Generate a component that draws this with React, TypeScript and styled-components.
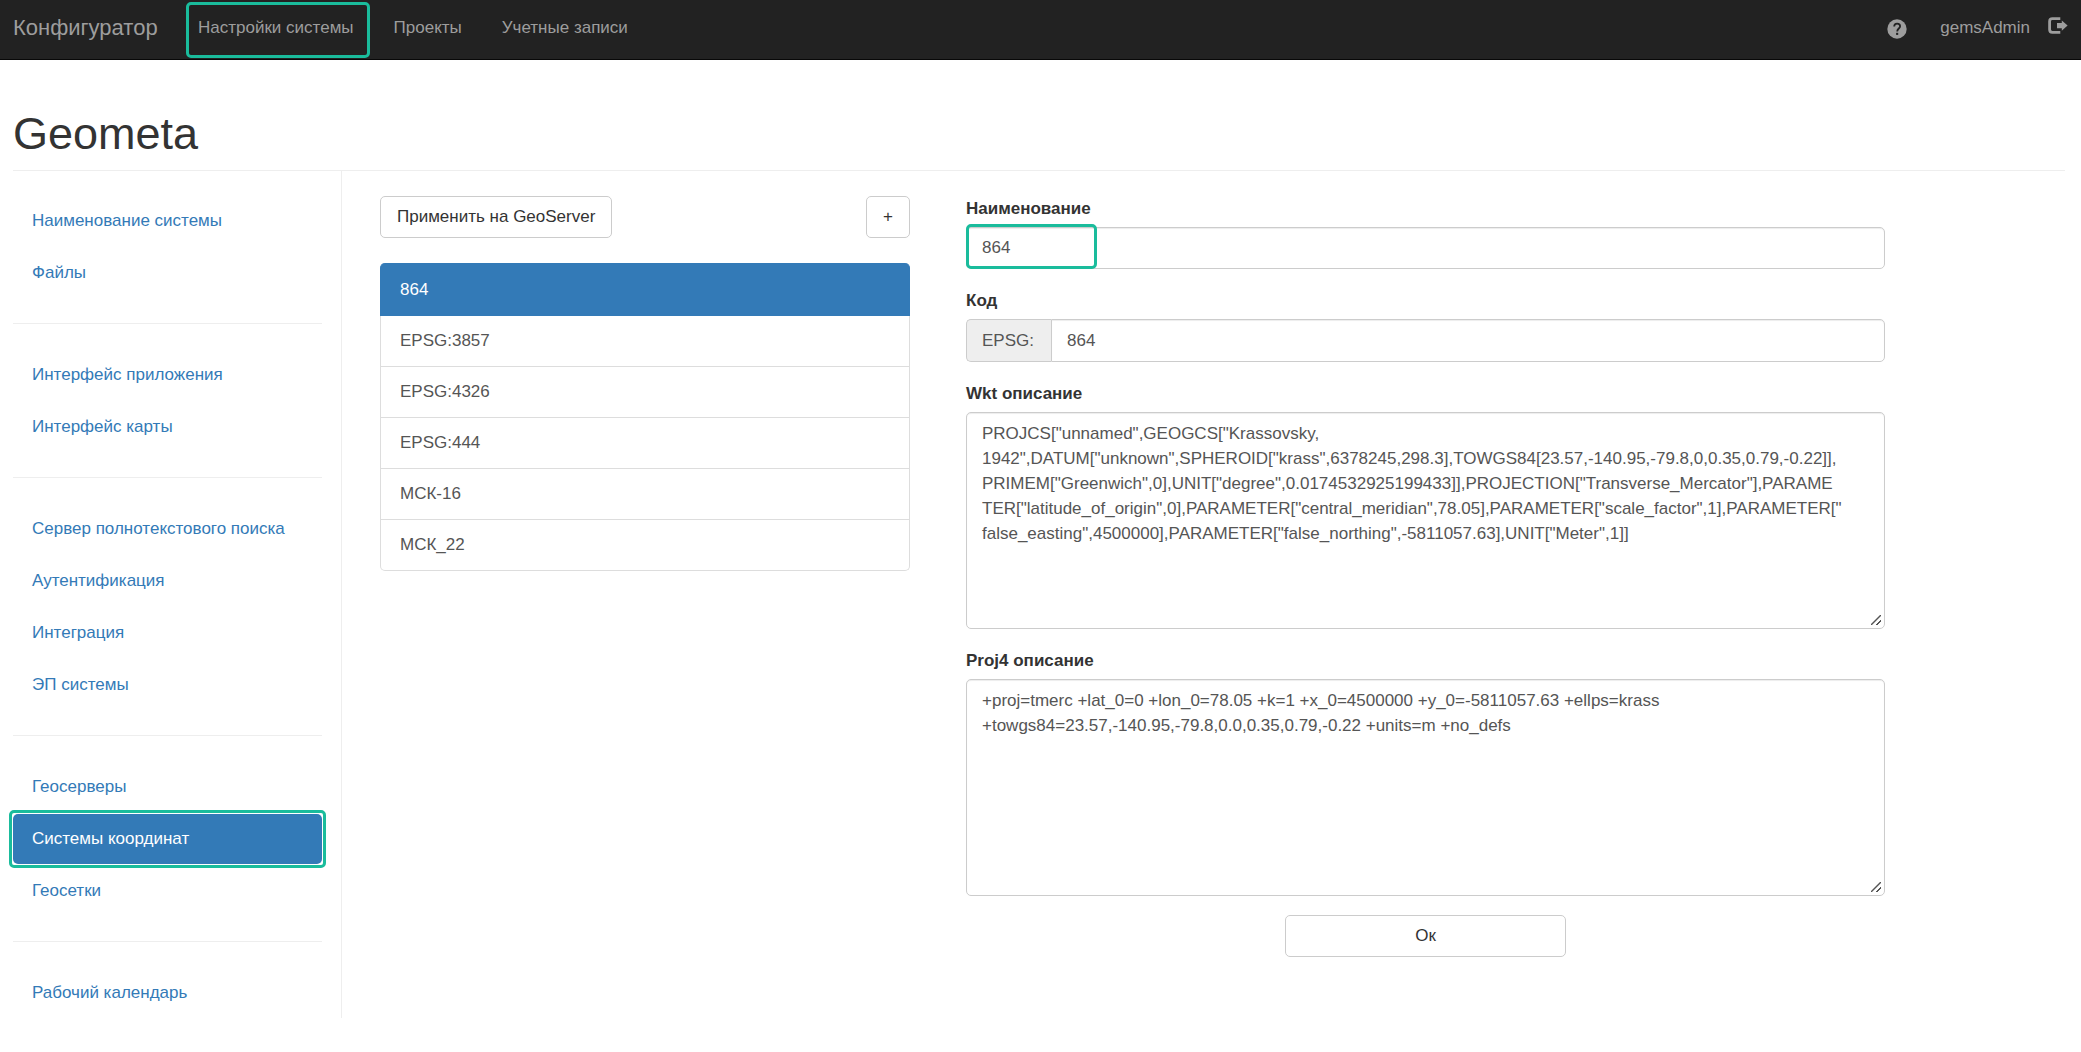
import React, { useState } from "react";
import styled, { createGlobalStyle, css } from "styled-components";

const accent = "#1abc9c";
const primary = "#337ab7";
const line = "#eeeeee";
const control = "#cccccc";

const GlobalStyle = createGlobalStyle`
  *, *::before, *::after { box-sizing: border-box; }
  body {
    margin: 0;
    background: #fff;
    color: #333;
    font-family: "Liberation Sans", Arial, Helvetica, sans-serif;
    font-size: 17px;
    line-height: 25px;
  }
  button, input, textarea { font: inherit; }
  a { text-decoration: none; }
  ul { list-style: none; margin: 0; padding: 0; }
`;

const callout = css`
  position: relative;
  &::after {
    content: "";
    position: absolute;
    border: 3px solid ${accent};
    border-radius: 5px;
    pointer-events: none;
  }
`;

const Navbar = styled.header`
  display: flex;
  align-items: stretch;
  height: 60px;
  padding: 0 13px;
  background: #222;
  border-bottom: 1px solid #080808;
`;

const Brand = styled.a`
  width: 165px;
  padding: 15px 0;
  color: #9d9d9d;
  font-size: 22px;
`;

const NavList = styled.nav`
  display: flex;
  flex: 1;
`;

const NavLink = styled.a<{ $marked?: boolean }>`
  padding: 15px 20px;
  color: #9d9d9d;
  ${({ $marked }) =>
    $marked &&
    css`
      ${callout}
      &::after {
        inset: 2px 4px 1px 8px;
      }
    `}
`;

const UserArea = styled.div`
  display: flex;
  align-items: flex-start;
  padding-top: 15px;
  color: #9d9d9d;
`;

const IconButton = styled.button`
  display: flex;
  padding: 0;
  border: 0;
  background: none;
  color: inherit;
  cursor: pointer;
`;

const HelpButton = styled(IconButton)`
  margin: 4px 33px 0 0;
`;

const LogoutButton = styled(IconButton)`
  margin: 2px 0 0 18px;
`;

const Page = styled.div`
  padding: 49px 16px 0 13px;
`;

const Title = styled.h1`
  margin: 0;
  padding-bottom: 11px;
  border-bottom: 1px solid ${line};
  font-size: 45px;
  font-weight: 400;
  line-height: 50px;
`;

const Columns = styled.div`
  display: flex;
  align-items: flex-start;
`;

const Sidebar = styled.nav`
  flex: 0 0 329px;
  padding: 25px 19px 0 0;
  border-right: 1px solid ${line};
`;

const MenuGroup = styled.ul`
  display: grid;
  gap: 2px;
  & + & {
    margin-top: 25px;
    padding-top: 26px;
    border-top: 1px solid ${line};
  }
`;

const MenuLink = styled.a<{ $active?: boolean }>`
  display: block;
  padding: 12px 19px 13px;
  border-radius: 5px;
  color: ${primary};
  ${({ $active }) =>
    $active &&
    css`
      ${callout}
      background: ${primary};
      color: #fff;
      &::after {
        inset: -4px;
      }
    `}
`;

const Workspace = styled.main`
  flex: 1;
  display: grid;
  grid-template-columns: minmax(0, 530fr) minmax(0, 919fr);
  column-gap: 56px;
  align-items: start;
  padding: 25px 180px 0 38px;
`;

const Toolbar = styled.div`
  display: flex;
  justify-content: space-between;
  margin-bottom: 25px;
`;

const Button = styled.button`
  padding: 7px 16px 8px;
  border: 1px solid ${control};
  border-radius: 5px;
  background: #fff;
  color: #333;
  cursor: pointer;
`;

const SubmitButton = styled(Button)`
  display: block;
  width: 281px;
  margin: 0 auto;
`;

const SystemItem = styled.button<{ $active: boolean }>`
  display: block;
  width: 100%;
  padding: 12px 19px 13px;
  border: 1px solid #ddd;
  border-top: 0;
  background: #fff;
  color: #555;
  text-align: left;
  cursor: pointer;
  li:first-child > & {
    border-radius: 5px 5px 0 0;
  }
  li:last-child > & {
    border-radius: 0 0 5px 5px;
  }
  ${({ $active }) =>
    $active &&
    css`
      padding: 14px 19px 13px;
      border-color: ${primary};
      background: ${primary};
      color: #fff;
    `}
`;

const Field = styled.div`
  margin-bottom: 19px;
`;

const Label = styled.label`
  display: block;
  margin-bottom: 6px;
  font-weight: 700;
`;

const controlStyle = css`
  display: block;
  width: 100%;
  margin: 0;
  border: 1px solid ${control};
  border-radius: 5px;
  background: #fff;
  box-shadow: inset 0 1px 1px rgba(0, 0, 0, 0.075);
  color: #555;
`;

const Input = styled.input`
  ${controlStyle}
  height: 42px;
  padding: 8px 15px;
`;

const MarkedControl = styled.div`
  ${callout}
  &::after {
    inset: -3px auto 0 0;
    width: 131px;
  }
`;

const InputGroup = styled.div`
  display: flex;
  ${Input} {
    flex: 1;
    height: auto;
    border-radius: 0 5px 5px 0;
  }
`;

const Addon = styled.span`
  width: 85px;
  padding: 8px 15px;
  border: 1px solid ${control};
  border-right: 0;
  border-radius: 5px 0 0 5px;
  background: #eee;
  color: #555;
`;

const TextArea = styled.textarea`
  ${controlStyle}
  height: 217px;
  padding: 8px 15px;
  resize: vertical;
  &::-webkit-resizer {
    background: linear-gradient(
        135deg,
        transparent 44%,
        #555 46%,
        #555 54%,
        transparent 56%,
        transparent 70%,
        #555 72%,
        #555 80%,
        transparent 82%
      )
      2px 2px / 10px 10px no-repeat;
  }
`;

const HelpIcon = () => (
  <svg width="20" height="20" viewBox="0 0 20 20" aria-hidden="true">
    <circle cx="10" cy="10" r="9.7" fill="currentColor" />
    <path d="M7.2 7.6C7.2 5.6 8.3 4.6 10.1 4.6c1.8 0 3 1.1 3 2.6 0 2.2-2.9 2.5-2.9 5.2" fill="none" stroke="#222" strokeWidth="1.8" />
    <rect x="9.1" y="13.8" width="2.1" height="2.1" fill="#222" />
  </svg>
);

const LogoutIcon = () => (
  <svg width="20" height="18" viewBox="0 0 20 18" aria-hidden="true">
    <path d="M12.3 1.6H4.4Q1.6 1.6 1.6 4.4v8.2q0 2.8 2.8 2.8H12.3" fill="none" stroke="currentColor" strokeWidth="2.8" />
    <path d="M9 6h4.8V3.4L19.6 8.6l-5.8 5.2v-2.6H9z" fill="currentColor" />
  </svg>
);

const menu = [
  ["Наименование системы", "Файлы"],
  ["Интерфейс приложения", "Интерфейс карты"],
  ["Сервер полнотекстового поиска", "Аутентификация", "Интеграция", "ЭП системы"],
  ["Геосерверы", "Системы координат", "Геосетки"],
  ["Рабочий календарь"],
];

const systems = ["864", "EPSG:3857", "EPSG:4326", "EPSG:444", "МСК-16", "МСК_22"];

const wkt = [
  'PROJCS["unnamed",GEOGCS["Krassovsky,',
  '1942",DATUM["unknown",SPHEROID["krass",6378245,298.3],TOWGS84[23.57,-140.95,-79.8,0,0.35,0.79,-0.22]],',
  'PRIMEM["Greenwich",0],UNIT["degree",0.0174532925199433]],PROJECTION["Transverse_Mercator"],PARAME',
  'TER["latitude_of_origin",0],PARAMETER["central_meridian",78.05],PARAMETER["scale_factor",1],PARAMETER["',
  'false_easting",4500000],PARAMETER["false_northing",-5811057.63],UNIT["Meter",1]]',
].join("\n");

const proj4 = [
  "+proj=tmerc +lat_0=0 +lon_0=78.05 +k=1 +x_0=4500000 +y_0=-5811057.63 +ellps=krass",
  "+towgs84=23.57,-140.95,-79.8,0.0,0.35,0.79,-0.22 +units=m +no_defs",
].join("\n");

export default function App() {
  const [selected, setSelected] = useState("864");

  return (
    <>
      <GlobalStyle />
      <Navbar>
        <Brand href="#">Конфигуратор</Brand>
        <NavList>
          <NavLink href="#settings" $marked>Настройки системы</NavLink>
          <NavLink href="#projects">Проекты</NavLink>
          <NavLink href="#accounts">Учетные записи</NavLink>
        </NavList>
        <UserArea>
          <HelpButton type="button" aria-label="Справка"><HelpIcon /></HelpButton>
          <span>gemsAdmin</span>
          <LogoutButton type="button" aria-label="Выход"><LogoutIcon /></LogoutButton>
        </UserArea>
      </Navbar>
      <Page>
        <Title>Geometa</Title>
        <Columns>
          <Sidebar>
            {menu.map((group) => (
              <MenuGroup key={group[0]}>
                {group.map((name) => (
                  <li key={name}>
                    <MenuLink href="#" $active={name === "Системы координат"}>{name}</MenuLink>
                  </li>
                ))}
              </MenuGroup>
            ))}
          </Sidebar>
          <Workspace>
            <section>
              <Toolbar>
                <Button type="button">Применить на GeoServer</Button>
                <Button type="button">+</Button>
              </Toolbar>
              <ul>
                {systems.map((name) => (
                  <li key={name}>
                    <SystemItem type="button" $active={name === selected} onClick={() => setSelected(name)}>
                      {name}
                    </SystemItem>
                  </li>
                ))}
              </ul>
            </section>
            <form onSubmit={(event) => event.preventDefault()}>
              <Field>
                <Label htmlFor="name">Наименование</Label>
                <MarkedControl>
                  <Input id="name" type="text" defaultValue="864" />
                </MarkedControl>
              </Field>
              <Field>
                <Label htmlFor="code">Код</Label>
                <InputGroup>
                  <Addon>EPSG:</Addon>
                  <Input id="code" type="text" defaultValue="864" />
                </InputGroup>
              </Field>
              <Field>
                <Label htmlFor="wkt">Wkt описание</Label>
                <TextArea id="wkt" defaultValue={wkt} spellCheck={false} />
              </Field>
              <Field>
                <Label htmlFor="proj4">Proj4 описание</Label>
                <TextArea id="proj4" defaultValue={proj4} spellCheck={false} />
              </Field>
              <SubmitButton type="submit">Ок</SubmitButton>
            </form>
          </Workspace>
        </Columns>
      </Page>
    </>
  );
}
